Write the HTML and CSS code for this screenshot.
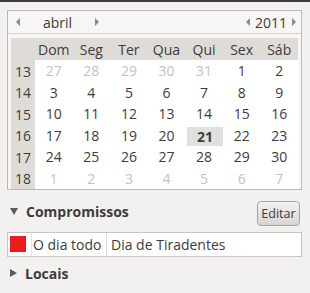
FILE: index.html
```html
<!DOCTYPE html>
<html lang="pt">
<head>
    <meta charset="UTF-8">
    <title>Calendário</title>
    <link rel="stylesheet" href="styles.css">
</head>
<body>
    <div class="topbar"></div>
    <div class="calendar">
        <div class="cal-head">
            <span class="arrow left"></span>
            <span class="month">abril</span>
            <span class="arrow right"></span>
            <span class="spacer"></span>
            <span class="arrow left"></span>
            <span class="year">2011</span>
            <span class="arrow right"></span>
        </div>
        <div class="cal-body">
            <div class="grid">
                <div class="dname corner"></div>
                <div class="dname">Dom</div><div class="dname">Seg</div><div class="dname">Ter</div><div class="dname">Qua</div><div class="dname">Qui</div><div class="dname">Sex</div><div class="dname">Sáb</div>

                <div class="week">13</div>
                <div class="day other">27</div><div class="day other">28</div><div class="day other">29</div><div class="day other">30</div><div class="day other">31</div><div class="day">1</div><div class="day">2</div>

                <div class="week">14</div>
                <div class="day">3</div><div class="day">4</div><div class="day">5</div><div class="day">6</div><div class="day">7</div><div class="day">8</div><div class="day">9</div>

                <div class="week">15</div>
                <div class="day">10</div><div class="day">11</div><div class="day">12</div><div class="day">13</div><div class="day">14</div><div class="day">15</div><div class="day">16</div>

                <div class="week">16</div>
                <div class="day">17</div><div class="day">18</div><div class="day">19</div><div class="day">20</div><div class="day today">21</div><div class="day">22</div><div class="day">23</div>

                <div class="week">17</div>
                <div class="day">24</div><div class="day">25</div><div class="day">26</div><div class="day">27</div><div class="day">28</div><div class="day">29</div><div class="day">30</div>

                <div class="week">18</div>
                <div class="day other">1</div><div class="day other">2</div><div class="day other">3</div><div class="day other">4</div><div class="day other">5</div><div class="day other">6</div><div class="day other">7</div>
            </div>
        </div>
    </div>

    <div class="section first">
        <span class="tri down"></span>
        <span class="title">Compromissos</span>
        <button class="btn">Editar</button>
    </div>

    <div class="event">
        <span class="swatch"></span>
        <span class="when">O dia todo</span>
        <span class="what">Dia de Tiradentes</span>
    </div>

    <div class="section last">
        <span class="tri right"></span>
        <span class="title">Locais</span>
    </div>
</body>
</html>
```

FILE: styles.css
```css
body {
    margin: 0;
    background: #f2f1f0;
    color: #3c3c3c;
    font-family: 'Open Sans', 'Noto Sans', sans-serif;
    font-size: 13px;
}
.topbar {
    height: 2px;
    background: #3c3b37;
}
.calendar {
    margin: 8px 8px 0 7px;
    border: 1px solid #bdb9b3;
    background: #f7f6f5;
}
.cal-head {
    display: flex;
    align-items: center;
    height: 22px;
    border-bottom: 1px solid #d8d5d0;
    padding: 0 5px 0 8px;
    font-size: 14px;
}
.month {
    width: 67px;
    text-align: center;
    margin: 0 4px;
}
.year {
    margin: 0 5px;
}
.spacer {
    flex: 1;
}
.arrow {
    width: 0;
    height: 0;
    border-top: 4px solid transparent;
    border-bottom: 4px solid transparent;
}
.arrow.left {
    border-right: 4px solid #8a8884;
}
.arrow.right {
    border-left: 4px solid #8a8884;
}
.cal-body {
    padding: 4px 3px 0 3px;
}
.grid {
    display: grid;
    grid-template-columns: 24px repeat(7, 1fr);
    grid-template-rows: 22px repeat(6, 21.5px);
    background: #fff;
    font-size: 14px;
}
.dname {
    background: #dfdcd8;
    display: flex;
    align-items: center;
    justify-content: center;
}
.week {
    background: #dfdcd8;
    display: flex;
    align-items: flex-end;
    justify-content: center;
    padding-bottom: 1px;
}
.day {
    display: flex;
    align-items: center;
    justify-content: center;
}
.day.other {
    color: #c4c2bf;
}
.day.today {
    background: #e2e0dd;
    font-weight: bold;
    margin: 2px 0 0 2px;
}
.section {
    display: flex;
    align-items: center;
    height: 26px;
    padding: 0 2px 0 10px;
}
.section.first {
    margin-top: 8px;
}
.section.last {
    margin-top: 3px;
}
.title {
    font-weight: bold;
    font-size: 14px;
    margin-left: 8px;
    flex: 1;
}
.tri {
    width: 0;
    height: 0;
}
.tri.down {
    border-left: 4px solid transparent;
    border-right: 4px solid transparent;
    border-top: 7px solid #5c5b57;
}
.tri.right {
    border-top: 4px solid transparent;
    border-bottom: 4px solid transparent;
    border-left: 7px solid #5c5b57;
}
.btn {
    width: 43px;
    height: 25px;
    margin: 5px 8px 0 0;
    border: 1px solid #a7a39d;
    border-radius: 4px;
    background: linear-gradient(#f4f3f1, #d9d6d2);
    color: #3c3c3c;
    font-family: inherit;
    font-size: 12.5px;
    padding: 0;
}
.event {
    display: flex;
    align-items: stretch;
    height: 23px;
    margin: 8px 8px 0 7px;
    border: 1px solid #c9c5c0;
    background: #fff;
    font-size: 14px;
}
.swatch {
    width: 16px;
    height: 16px;
    margin: 3px 5px 0 2px;
    background: #ec1c1c;
}
.when {
    display: flex;
    align-items: center;
    width: 73px;
    border-right: 1px solid #ddd;
    border-left: 1px solid #e4e4e4;
    padding-left: 1px;
}
.what {
    display: flex;
    align-items: center;
    padding-left: 4px;
}
```
